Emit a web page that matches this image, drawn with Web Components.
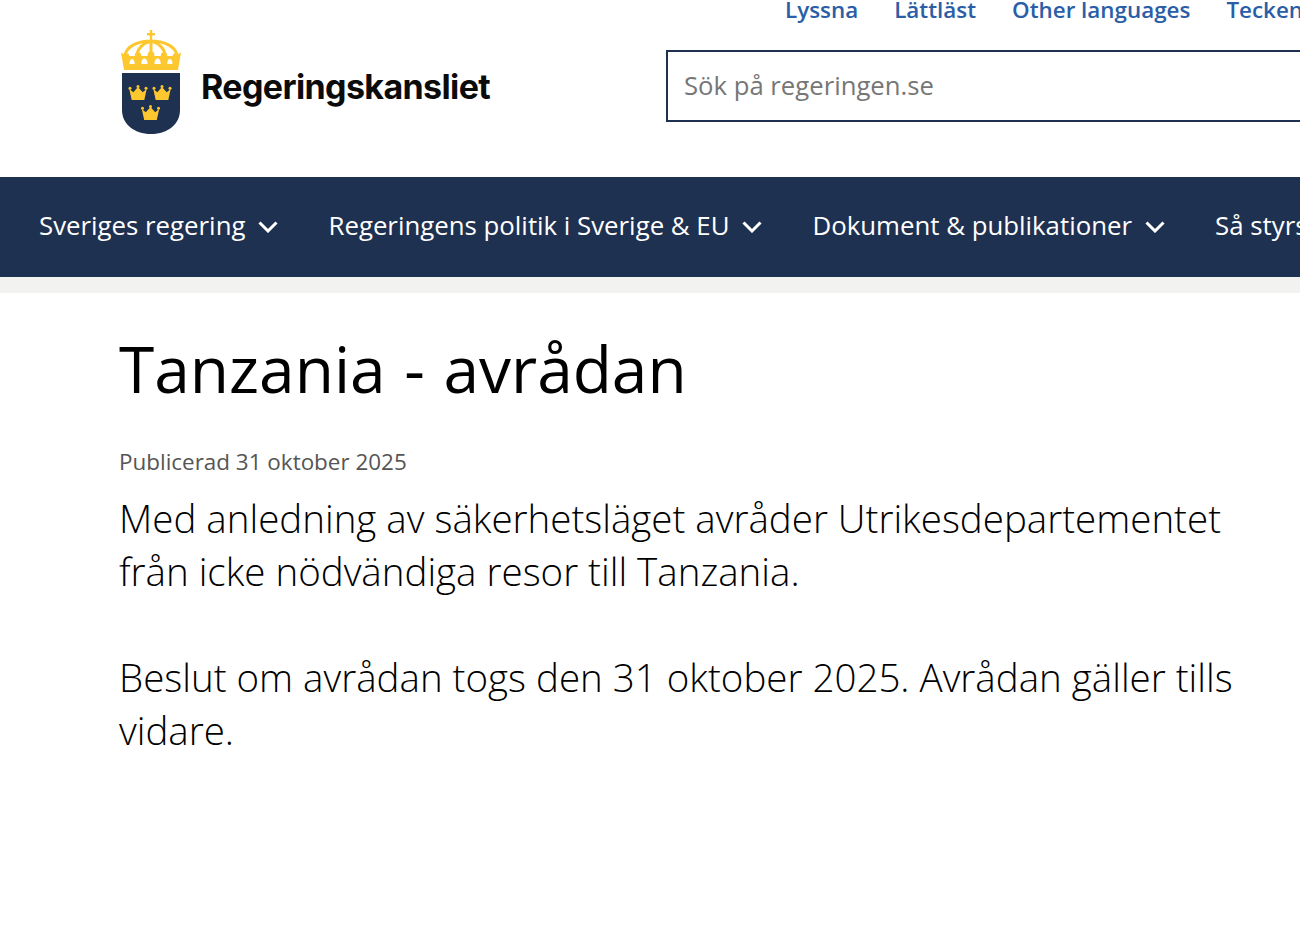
<!DOCTYPE html>
<html lang="sv">
<head>
<meta charset="utf-8">
<title>Tanzania - avrådan</title>
<style>
  html, body { margin: 0; height: 100%; overflow: hidden; background: #fff; }
  body { font-family: "Open Sans", "Liberation Sans", sans-serif; width: 1300px; height: 925px; }
</style>
</head>
<body>
<site-header></site-header>
<main-nav>
  <nav-item>Sveriges regering</nav-item>
  <nav-item>Regeringens politik i Sverige &amp; EU</nav-item>
  <nav-item>Dokument &amp; publikationer</nav-item>
  <nav-item>Så styrs Sverige</nav-item>
</main-nav>
<page-article heading="Tanzania - avrådan" published="Publicerad 31 oktober 2025">
  <p>Med anledning av säkerhetsläget avråder Utrikesdepartementet från icke nödvändiga resor till Tanzania.</p>
  <p>Beslut om avrådan togs den 31 oktober 2025. Avrådan gäller tills vidare.</p>
</page-article>

<script>
const crown = (x, y) => `
  <g transform="translate(${x} ${y})" fill="#fdc82f">
    <circle cx="1.500" cy="3.200" r="1.500"/><circle cx="9.500" cy="1.500" r="1.500"/><circle cx="17.500" cy="3.200" r="1.500"/>
    <path d="M.8 4 3.200 15h12.600L18.200 4l-4 3.300L9.500 2 4.800 7.300z"/>
  </g>`;

class SiteHeader extends HTMLElement {
  constructor() {
    super();
    this.attachShadow({ mode: 'open' });
    this.shadowRoot.innerHTML = `
      <style>
        :host { display: block; height: 177px; overflow: hidden; }
        .tools {
          display: flex; gap: 36px; height: 22px; margin-top: -5px;
          padding-left: 785px; white-space: nowrap;
          font: 600 22.400px/30px "Open Sans", sans-serif; color: #2a5ea6;
        }
        .main { display: flex; align-items: flex-start; padding: 13px 0 0 121px; }
        .logo { display: flex; align-items: center; gap: 20px; width: 545px; flex: none; }
        svg { display: block; flex: none; }
        .word {
          font: 700 34px/1 Inter, sans-serif; letter-spacing: -0.620px; color: #0b0b0b;
          padding-top: 8px;
        }
        .search {
          flex: none; box-sizing: border-box; width: 700px; height: 72px; margin-top: 20px;
          border: 2px solid #1f3150; padding: 0 0 2px 16px;
          display: flex; align-items: center;
          font: 400 25.700px "Open Sans", sans-serif; color: #767676;
        }
      </style>
      <div class="tools"><span>Lyssna</span><span>Lättläst</span><span>Other languages</span><span>Teckenspråk</span></div>
      <div class="main">
        <div class="logo">
          <svg width="60" height="105" viewBox="0 0 60 105" aria-hidden="true">
            <path fill="#fdc82f" d="M28.800 0h2.400v3h2.800v2.400h-2.800V10h-2.400V5.400H26V3h2.800z"/>
            <path fill="none" stroke="#fdc82f" stroke-width="3" d="M4 25C6 16 17 11 30 11s24 5 26 14M16 26c0-7 6-13 14-15 8 2 14 8 14 15M30 11v15"/>
            <path fill="#fdc82f" d="M0 22.500 6 26h48l6-3.500L57 40H3z"/>
            <path fill="#fff" d="M8.500 34c0-3.500 1.200-5 2.600-5s2.600 1.500 2.600 5zM20.200 34c0-3.500 1.400-5.500 3.200-5.500s3.200 2 3.200 5.500zM33.400 34c0-3.500 1.400-5.500 3.200-5.500s3.200 2 3.200 5.500zM46.300 34c0-3.500 1.200-5 2.600-5s2.600 1.500 2.600 5z"/>
            <g fill="#fdc82f">
              <circle cx="17" cy="25.500" r="3.200"/><circle cx="30" cy="25" r="3.400"/><circle cx="43" cy="25.500" r="3.200"/>
              <circle cx="5.500" cy="26" r="2.800"/><circle cx="54.500" cy="26" r="2.800"/>
            </g>
            <path fill="#1f3150" d="M1 43h58v37c0 14-12 24-29 24S1 94 1 80z"/>
            ${crown(7.500, 55)}${crown(31.500, 55)}${crown(20, 75)}
          </svg>
          <span class="word">Regeringskansliet</span>
        </div>
        <div class="search">Sök på regeringen.se</div>
      </div>`;
  }
}

class MainNav extends HTMLElement {
  constructor() {
    super();
    this.attachShadow({ mode: 'open' });
    this.shadowRoot.innerHTML = `
      <style>
        :host {
          display: flex; height: 100px; gap: 50px; padding-left: 39px;
          background: #1f3150; border-bottom: 16px solid #f2f2f0;
          overflow: hidden; white-space: nowrap;
        }
      </style>
      <slot></slot>`;
  }
}

class NavItem extends HTMLElement {
  constructor() {
    super();
    this.attachShadow({ mode: 'open' });
    this.shadowRoot.innerHTML = `
      <style>
        :host {
          display: flex; align-items: center; gap: 13px; flex: none; padding-bottom: 4px;
          font: 400 25.800px "Open Sans", sans-serif; color: #fff;
        }
        svg { display: block; margin-top: 3px; }
      </style>
      <slot></slot>
      <svg width="20" height="12" viewBox="0 0 20 12" fill="none" stroke="#fff" stroke-width="3">
        <path d="M1.500 1.500 10 10l8.500-8.500"/>
      </svg>`;
  }
}

class PageArticle extends HTMLElement {
  constructor() {
    super();
    this.attachShadow({ mode: 'open' });
    this.shadowRoot.innerHTML = `
      <style>
        :host { display: block; padding: 32px 60px 0 119px; color: #000; }
        h1 { margin: 0; font: 400 64px/88px "Open Sans", sans-serif; word-spacing: 2px; }
        .meta { margin-top: 34px; font: 400 22.450px/30px "Open Sans", sans-serif; color: #555; }
        .body { font: 300 38.500px/53px "Open Sans", sans-serif; margin-top: 15px; }
        ::slotted(p) { margin: 0 0 53px; }
      </style>
      <h1></h1>
      <div class="meta"></div>
      <div class="body"><slot></slot></div>`;
    this.shadowRoot.querySelector('h1').textContent = this.getAttribute('heading');
    this.shadowRoot.querySelector('.meta').textContent = this.getAttribute('published');
  }
}

customElements.define('site-header', SiteHeader);
customElements.define('main-nav', MainNav);
customElements.define('nav-item', NavItem);
customElements.define('page-article', PageArticle);
</script>
</body>
</html>
